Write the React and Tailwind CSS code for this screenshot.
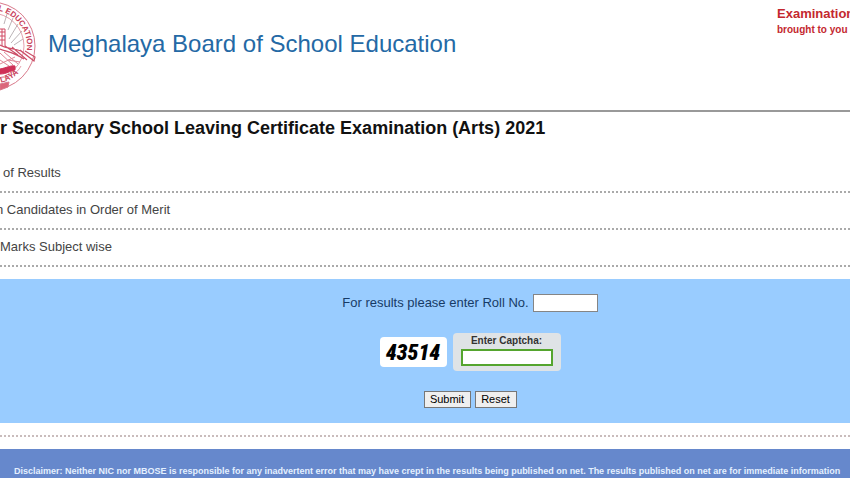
const links = [
  { text: "of Results", className: "pl-[3px]" },
  { text: "n Candidates in Order of Merit", className: "-ml-1" },
  { text: "Marks Subject wise", className: "pl-0" },
];

function Emblem() {
  return (
    <svg className="h-24 w-9 shrink-0" viewBox="0 0 36 96" fill="none" stroke="#d9798a" aria-label="Board emblem">
      <defs>
        <path id="ring-top" d="M-9 10 A36 36 0 0 1 27 46 L27 60" />
        <path id="ring-bottom" d="M-16 83 A38 38 0 0 0 28 58" />
      </defs>
      <circle cx="-9" cy="46" r="44" strokeWidth="1" />
      <circle cx="-9" cy="46" r="33" strokeWidth="0.7" />
      <path d="M4 24 L7 14 M8 30 L13 18 M9 39 L18 24 M11 43 L22 31 M14 45 L23 39" stroke="#a9a0a3" strokeWidth="0.8" />
      <path d="M0 29 H5 V46 M0 32 H5 M0 36 H5 M0 40 H5 M2 29 V46" stroke="#d04863" />
      <path d="M0 45 C7 49 13 48 21 51 L34 61 M0 49 C8 52 15 53 24 59 M5 46 L18 55 M12 47 L27 60 M20 50 L34 61 L35 57 L25 51" stroke="#cc5068" strokeWidth="1.2" />
      <path d="M0 53 L13 65 M4 52 L18 64 M0 60 L9 66 M0 64 L15 57 M8 60 L20 62" stroke="#df8797" />
      <path d="M0 69 C6 68 11 65 15 66 L15 70 C9 71 7 74 0 74 Z" fill="#cf3057" stroke="#cf3057" />
      <path d="M0 84 L9 82 L8 87 L0 90 Z" fill="#db6679" />
      <path d="M0 78 C9 77 17 74 21 66" strokeWidth="0.7" />
      <g fill="#c83f5b" stroke="none" className="font-['Liberation_Sans'] text-[8px] font-bold">
        <text>
          <textPath href="#ring-top" startOffset="7">L EDUCATION</textPath>
        </text>
        <text>
          <textPath href="#ring-bottom" startOffset="17">LAYA</textPath>
        </text>
      </g>
    </svg>
  );
}

export default function App() {
  return (
    <div className="min-h-screen overflow-x-hidden bg-white font-['Liberation_Sans',Arial,sans-serif] text-[#444]">
      <header className="flex h-28 justify-between border-b-2 border-[#999]">
        <div className="flex items-start gap-3">
          <Emblem />
          <h1 className="pt-7 text-2xl leading-8 whitespace-nowrap text-[#2469a5]">Meghalaya Board of School Education</h1>
        </div>
        <div className="w-[73px] overflow-hidden pt-1 font-bold whitespace-nowrap text-[#c4282f]">
          <p className="text-[13px] leading-5">Examination</p>
          <p className="text-[10px] leading-3">brought to you by</p>
        </div>
      </header>
      <main>
        <h2 className="pt-1 text-lg leading-6 font-bold text-[#111]">r Secondary School Leaving Certificate Examination (Arts) 2021</h2>
        <nav className="pt-4">
          {links.map((link) => (
            <a key={link.text} href="#" className="block h-[37px] border-b-2 border-dotted border-[#aaa] pt-[5px] text-[13px] leading-6">
              <span className={link.className}>{link.text}</span>
            </a>
          ))}
        </nav>
        <form className="mt-3 flex h-36 flex-col items-center bg-[#99ccff] pt-3.5 pl-[90px] text-[#173b66]">
          <div className="flex h-5 items-center gap-1">
            <label htmlFor="roll" className="text-[13px]">For results please enter Roll No.</label>
            <input id="roll" className="h-[18px] w-[65px] border border-[#858585] bg-white" />
          </div>
          <div className="mt-5 flex items-center gap-1.5">
            <div className="flex h-[30px] w-[67px] items-center justify-center rounded-sm bg-white font-['Roboto_Condensed',Roboto,sans-serif] text-[22px] font-black text-black italic">43514</div>
            <div className="flex h-[38px] w-[108px] flex-col items-center rounded-sm bg-[#dfe3e6]">
              <label htmlFor="captcha" className="text-[10px] leading-4 font-bold text-[#333]">Enter Captcha:</label>
              <input id="captcha" className="h-[17px] w-[92px] border-2 border-[#55a52e] bg-white" />
            </div>
          </div>
          <div className="mt-5 flex gap-1">
            <button type="submit" className="h-[17px] w-[47px] border border-[#777] bg-[#efefef] text-[11px] leading-[15px] text-black">Submit</button>
            <button type="reset" className="h-[17px] w-[42px] border border-[#777] bg-[#efefef] text-[11px] leading-[15px] text-black">Reset</button>
          </div>
        </form>
        <div className="mt-3 border-b-2 border-dotted border-[#c9bcbc]" />
      </main>
      <footer className="mt-3 bg-[#6688cc] px-3.5 pt-4 pb-1 text-[9px] leading-3 font-bold whitespace-nowrap text-[#e4f0ff]">
        Disclaimer: Neither NIC nor MBOSE is responsible for any inadvertent error that may have crept in the results being published on net. The results published on net are for immediate information
      </footer>
    </div>
  );
}
